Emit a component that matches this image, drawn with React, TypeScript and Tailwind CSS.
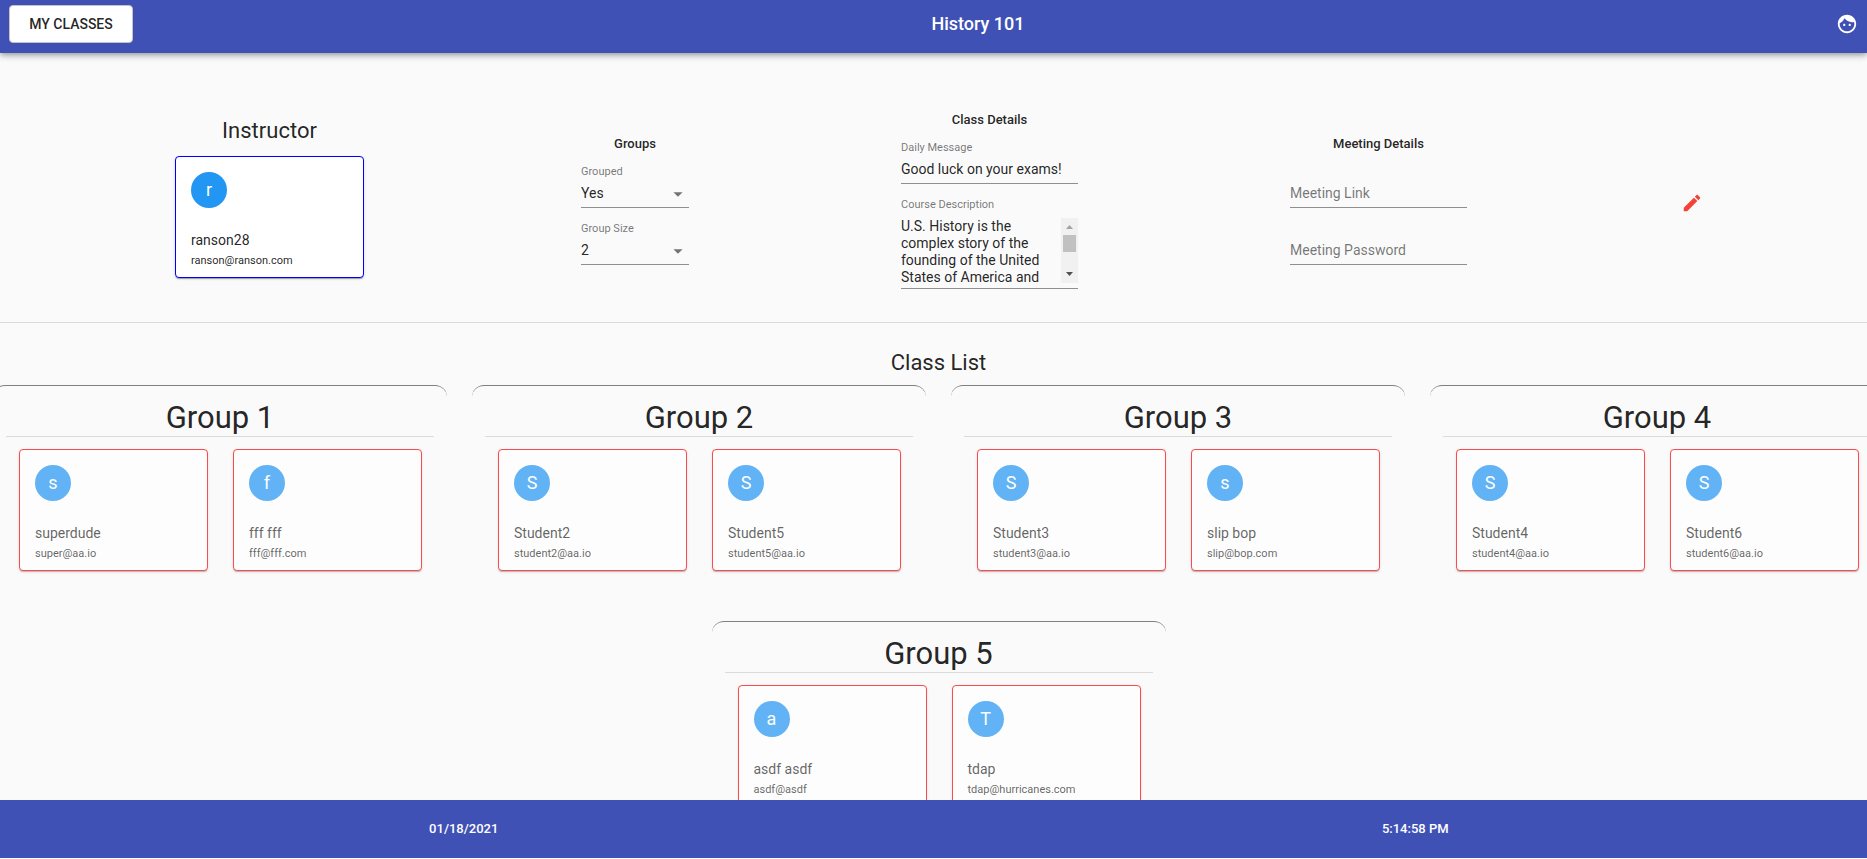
import React from "react";

type Person = { name: string; email: string; initial: string };

const instructor: Person = { name: "ranson28", email: "ranson@ranson.com", initial: "r" };

const groups: { title: string; members: Person[] }[] = [
  {
    title: "Group 1",
    members: [
      { name: "superdude", email: "super@aa.io", initial: "s" },
      { name: "fff fff", email: "fff@fff.com", initial: "f" },
    ],
  },
  {
    title: "Group 2",
    members: [
      { name: "Student2", email: "student2@aa.io", initial: "S" },
      { name: "Student5", email: "student5@aa.io", initial: "S" },
    ],
  },
  {
    title: "Group 3",
    members: [
      { name: "Student3", email: "student3@aa.io", initial: "S" },
      { name: "slip bop", email: "slip@bop.com", initial: "s" },
    ],
  },
  {
    title: "Group 4",
    members: [
      { name: "Student4", email: "student4@aa.io", initial: "S" },
      { name: "Student6", email: "student6@aa.io", initial: "S" },
    ],
  },
  {
    title: "Group 5",
    members: [
      { name: "asdf asdf", email: "asdf@asdf", initial: "a" },
      { name: "tdap", email: "tdap@hurricanes.com", initial: "T" },
    ],
  },
];

const headingClass = "-mb-[3px] text-center text-[13px] leading-5 font-medium";
const labelClass = "block h-4 text-[11px] leading-4 text-black/54";
const controlClass =
  "block h-7 w-full appearance-none rounded-none border-b border-[#8f8f8f] bg-transparent px-0 pt-0 pb-[2px] text-sm text-black/87 outline-none placeholder:text-black/54";

function PersonCard({ person, active = false }: { person: Person; active?: boolean }) {
  return (
    <article
      className={
        "flex h-[122px] w-[189px] flex-col rounded-[4px] border bg-white px-[15px] pt-[15px] shadow-[0_2px_1px_-1px_rgba(0,0,0,0.2),0_1px_1px_rgba(0,0,0,0.14),0_1px_3px_rgba(0,0,0,0.12)] " +
        (active ? "border-[#0000ff]" : "border-[#ff0000] opacity-70")
      }
    >
      <span className="flex size-9 items-center justify-center rounded-full bg-[#2196f3] text-lg text-white">
        {person.initial}
      </span>
      <span className="mt-[22px] text-sm leading-5 text-black/87">{person.name}</span>
      <span className="mt-px text-[11px] leading-5 text-black/87">{person.email}</span>
    </article>
  );
}

function SelectField({ id, label, value }: { id: string; label: string; value: string }) {
  return (
    <div>
      <label htmlFor={id} className={labelClass}>
        {label}
      </label>
      <div className="relative">
        <select id={id} defaultValue={value} className={controlClass}>
          <option value={value}>{value}</option>
        </select>
        <svg
          viewBox="0 0 24 24"
          className="pointer-events-none absolute top-[3px] right-0 size-[22px] fill-black/54"
          aria-hidden="true"
        >
          <path d="M7 10l5 5 5-5z" />
        </svg>
      </div>
    </div>
  );
}

function GroupPanel({ title, members }: { title: string; members: Person[] }) {
  return (
    <section className="h-[211px] w-[454px] rounded-t-xl border-t border-[#808080] px-[13px] pt-[13px]">
      <h3 className="border-b border-black/12 text-center text-[31px] leading-[37px] font-normal text-black/87">
        {title}
      </h3>
      <div className="flex gap-[25px] pt-3 pl-[13px]">
        {members.map((m) => (
          <PersonCard key={m.email} person={m} />
        ))}
      </div>
    </section>
  );
}

export default function App() {
  return (
    <div className="flex h-screen flex-col overflow-hidden bg-[#fafafa] pb-px font-['Roboto',sans-serif] text-black/87">
      <header className="relative flex items-center bg-[#3f51b5] pt-[5px] pb-[10px] pl-[9px] text-white shadow-[0_2px_4px_-1px_rgba(0,0,0,0.2),0_4px_5px_rgba(0,0,0,0.14),0_1px_10px_rgba(0,0,0,0.12)]">
        <button
          type="button"
          className="h-[38px] w-[124px] rounded-[4px] border border-[#c4c4c4] bg-white text-sm font-medium text-black/87"
        >
          MY CLASSES
        </button>
        <h1 className="flex-1 text-center text-lg font-medium">History 101</h1>
        <button type="button" aria-label="Account" className="-mr-1 flex w-12 justify-center">
          <svg viewBox="0 0 24 24" className="size-[22px] fill-white" aria-hidden="true">
            <path d="M9 11.75c-.69 0-1.25.56-1.25 1.25s.56 1.25 1.25 1.25 1.25-.56 1.25-1.25-.56-1.25-1.25-1.25zm6 0c-.69 0-1.25.56-1.25 1.25s.56 1.25 1.25 1.25 1.25-.56 1.25-1.25-.56-1.25-1.25-1.25zM12 2C6.48 2 2 6.48 2 12s4.48 10 10 10 10-4.48 10-10S17.52 2 12 2zm0 18c-4.41 0-8-3.59-8-8 0-.29.02-.58.05-.86 2.36-1.05 4.23-2.98 5.21-5.37C11.07 8.33 14.05 10 17.42 10c.78 0 1.53-.09 2.25-.26.21.71.33 1.47.33 2.26 0 4.41-3.59 8-8 8z" />
          </svg>
        </button>
      </header>

      <main className="min-h-0 flex-1 overflow-x-hidden overflow-y-auto [scrollbar-width:none]">
        <section className="flex items-center justify-between border-b border-black/12 pt-[57px] pr-[162px] pb-[33px] pl-[170px]">
          <div className="flex w-[199px] flex-col items-center pb-1">
            <h2 className="mb-[11px] text-[22px] leading-7 font-normal">Instructor</h2>
            <PersonCard person={instructor} active />
          </div>

          <div className="flex w-[108px] flex-col gap-[13px]">
            <h2 className={headingClass}>Groups</h2>
            <SelectField id="grouped" label="Grouped" value="Yes" />
            <SelectField id="group-size" label="Group Size" value="2" />
          </div>

          <div className="flex w-[177px] flex-col gap-[13px]">
            <h2 className={headingClass}>Class Details</h2>
            <div>
              <label htmlFor="daily-message" className={labelClass}>
                Daily Message
              </label>
              <input
                id="daily-message"
                type="text"
                defaultValue="Good luck on your exams!"
                className={controlClass}
              />
            </div>
            <div>
              <label htmlFor="description" className={labelClass}>
                Course Description
              </label>
              <div className="flex border-b border-[#8f8f8f] pt-[5px] pb-1">
                <textarea
                  id="description"
                  rows={4}
                  defaultValue="U.S. History is the complex story of the founding of the United States of America and"
                  className="block h-[66px] min-w-0 flex-1 resize-none overflow-hidden bg-transparent p-0 text-sm leading-[17px] outline-none"
                />
                <svg viewBox="0 0 17 65" className="h-[65px] w-[17px]" aria-hidden="true">
                  <rect width="17" height="65" fill="#f1f1f1" />
                  <path d="M5 11h7L8.500 7z" fill="#a3a3a3" />
                  <rect x="2" y="17" width="13" height="17" fill="#c1c1c1" />
                  <path d="M5 54h7l-3.500 4z" fill="#505050" />
                </svg>
              </div>
            </div>
          </div>

          <div className="flex w-[177px] flex-col gap-[13px]">
            <h2 className={headingClass}>Meeting Details</h2>
            <div className="pt-4">
              <input
                aria-label="Meeting Link"
                placeholder="Meeting Link"
                type="text"
                className={controlClass}
              />
            </div>
            <div className="pt-4">
              <input
                aria-label="Meeting Password"
                placeholder="Meeting Password"
                type="text"
                className={controlClass}
              />
            </div>
          </div>

          <button type="button" aria-label="Edit class" className="flex w-[26px] justify-center pt-[6px]">
            <svg viewBox="0 0 24 24" className="size-[22px] fill-[#f44336]" aria-hidden="true">
              <path d="M3 17.250V21h3.750L17.810 9.940l-3.750-3.750L3 17.250zM20.710 7.040c.39-.39.39-1.020 0-1.410l-2.340-2.340c-.39-.39-1.020-.39-1.410 0l-1.830 1.830 3.750 3.750 1.830-1.830z" />
            </svg>
          </button>
        </section>

        <section className="-mr-[30px] -ml-5 pt-[26px]">
          <h2 className="text-center text-[22px] leading-7 font-normal">Class List</h2>
          <div className="flex flex-wrap justify-center gap-[25px] pt-2">
            {groups.map((g) => (
              <GroupPanel key={g.title} title={g.title} members={g.members} />
            ))}
          </div>
        </section>
      </main>

      <footer className="-mr-6 -ml-3 grid h-[58px] shrink-0 grid-cols-2 items-center bg-[#3f51b5] text-center text-[13px] font-medium text-white">
        <time>01/18/2021</time>
        <time>5:14:58 PM</time>
      </footer>
    </div>
  );
}
